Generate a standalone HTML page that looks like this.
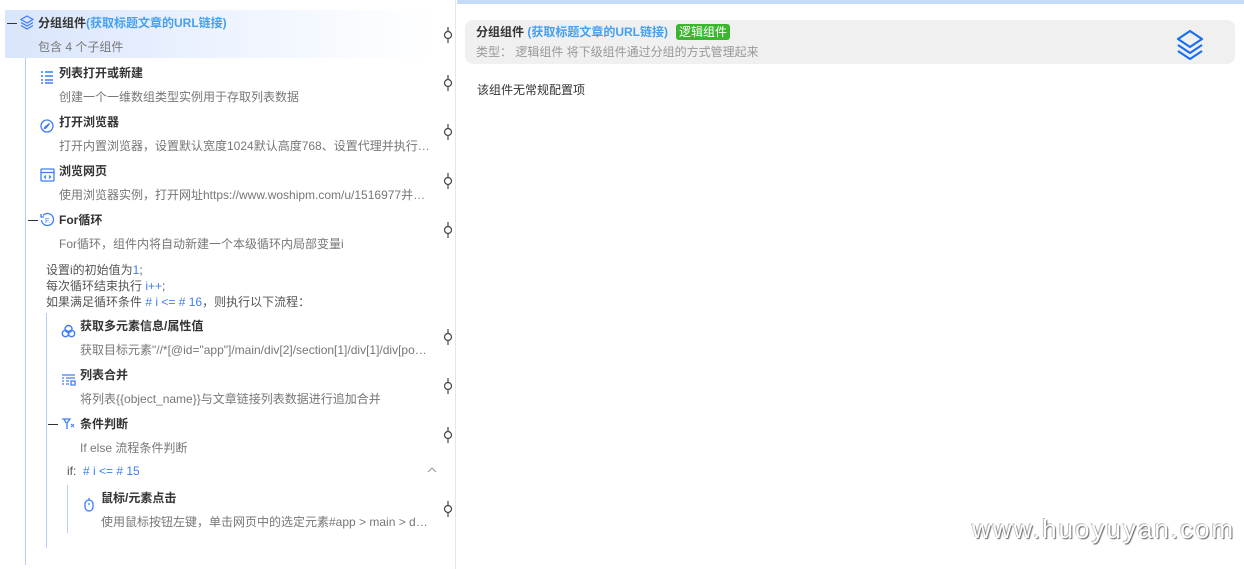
<!DOCTYPE html>
<html><head><meta charset="utf-8"><style>
*{margin:0;padding:0;box-sizing:border-box}
body{width:1244px;height:569px;background:#fff;position:relative;overflow:hidden;font-family:"Liberation Sans","Noto Sans CJK SC",sans-serif;font-size:12px;color:#333}
.a{position:absolute;white-space:nowrap;line-height:16px}
.t{font-weight:bold;color:#333}
.d{color:#777}
.b{color:#3d7ef5}
.vl{position:absolute;width:1px;background:#b9cdf4}
.dash{position:absolute;width:10px;height:1px;background:#333}
.con{position:absolute;width:10px;height:16px}
</style></head><body>
<div style="position:absolute;left:5px;top:10px;width:430px;height:48px;background:linear-gradient(90deg,#d9e5fc,#edf3ff 50%,#fafcff 85%,#fff)"></div>
<div style="position:absolute;left:455px;top:0;width:1px;height:569px;background:#e6e6e6"></div>
<div style="position:absolute;left:457px;top:0;width:787px;height:4px;background:#c5dcf8"></div>

<div class="dash" style="left:7px;top:23px"></div>
<svg class="a" style="left:20px;top:15px" width="14" height="15" viewBox="0 0 14 15" fill="none" stroke="#3d7ef5" stroke-width="1.2"><path d="M7 1L13 4.5 7 8 1 4.5Z"/><path d="M1 7.5L7 11 13 7.5"/><path d="M1 10.5L7 14 13 10.5"/></svg>
<div class="a t" style="left:38px;top:15px">分组组件<span style="color:#45a0f0">(获取标题文章的URL链接)</span></div>
<div class="a d" style="left:38px;top:39px">包含 4 个子组件</div>

<div class="vl" style="left:25px;top:58px;height:507px"></div>

<svg class="a" style="left:40px;top:70px" width="14" height="14" viewBox="0 0 14 14" stroke="#3d7ef5" stroke-width="1.4"><path d="M1 2h2M5 2h8M1 6h2M5 6h8M1 10h2M5 10h8M1 13h2M5 13h8"/></svg>
<div class="a t" style="left:59px;top:65px">列表打开或新建</div>
<div class="a d" style="left:59px;top:89px">创建一个一维数组类型实例用于存取列表数据</div>

<svg class="a" style="left:40px;top:119px" width="14" height="14" viewBox="0 0 14 14" fill="none" stroke="#3d7ef5" stroke-width="1.3"><circle cx="7" cy="7" r="6"/><path d="M9.5 4.5L6 9 4.5 9.5 5 8Z"/></svg>
<div class="a t" style="left:59px;top:114px">打开浏览器</div>
<div class="a d" style="left:59px;top:138px">打开内置浏览器，设置默认宽度1024默认高度768、设置代理并执行…</div>

<svg class="a" style="left:40px;top:168px" width="15" height="14" viewBox="0 0 15 14" fill="none" stroke="#3d7ef5" stroke-width="1.3"><rect x="1" y="1" width="13" height="12" rx="1"/><path d="M1 4.5h13M6 7.5l-1.5 1.5 1.5 1.5M9 7.5l1.5 1.5-1.5 1.5"/></svg>
<div class="a t" style="left:59px;top:163px">浏览网页</div>
<div class="a d" style="left:59px;top:187px">使用浏览器实例，打开网址https://www.woshipm.com/u/1516977并…</div>

<div class="dash" style="left:28px;top:220px"></div>
<svg class="a" style="left:40px;top:212px" width="15" height="15" viewBox="0 0 15 15" fill="none" stroke="#3d7ef5" stroke-width="1.3"><path d="M3 3.5A6 6 0 1 1 1.5 8"/><path d="M1 2v3h3"/><text x="5" y="11" font-size="7" fill="#3d7ef5" stroke="none" font-family="Liberation Sans">F.</text></svg>
<div class="a t" style="left:59px;top:212px">For循环</div>
<div class="a d" style="left:59px;top:236px">For循环，组件内将自动新建一个本级循环内局部变量i</div>

<div class="a" style="left:46px;top:262px;color:#555">设置i的初始值为<span class="b">1</span>;</div>
<div class="a" style="left:46px;top:278px;color:#555">每次循环结束执行 <span class="b">i++</span>;</div>
<div class="a" style="left:46px;top:294px;color:#555">如果满足循环条件 <span class="b"># i &lt;= # 16</span>，则执行以下流程：</div>

<div class="vl" style="left:46px;top:313px;height:235px"></div>
<svg class="a" style="left:61px;top:324px" width="15" height="14" viewBox="0 0 15 14" fill="none" stroke="#3d7ef5" stroke-width="1.4"><circle cx="7.5" cy="5" r="3.5"/><circle cx="4.5" cy="9.5" r="3.2"/><circle cx="10.5" cy="9.5" r="3.2"/></svg>
<div class="a t" style="left:80px;top:318px">获取多元素信息/属性值</div>
<div class="a d" style="left:80px;top:342px">获取目标元素"//*[@id="app"]/main/div[2]/section[1]/div[1]/div[po…</div>

<svg class="a" style="left:61px;top:373px" width="15" height="14" viewBox="0 0 15 14" stroke="#3d7ef5" stroke-width="1.3" fill="none"><path d="M1 2h13M1 5h2M5 5h9M1 8h2M5 8h3M1 11h2M5 11h3M10 8h4v4h-4z"/></svg>
<div class="a t" style="left:80px;top:367px">列表合并</div>
<div class="a d" style="left:80px;top:391px">将列表{{object_name}}与文章链接列表数据进行追加合并</div>

<div class="dash" style="left:48px;top:424px"></div>
<svg class="a" style="left:61px;top:418px" width="15" height="12" viewBox="0 0 15 12" stroke="#3d7ef5" stroke-width="1.3" fill="none"><path d="M1 1h8L6 5v6M3 1l2 4"/><path d="M10 6l3 3M13 6l-3 3" stroke-width="1"/></svg>
<div class="a t" style="left:80px;top:416px">条件判断</div>
<div class="a d" style="left:80px;top:440px">If else 流程条件判断</div>

<div class="a" style="left:67px;top:463px;color:#555">if: &nbsp;<span class="b"># i &lt;= # 15</span></div>
<svg class="a" style="left:427px;top:467px" width="10" height="6" viewBox="0 0 10 6" fill="none" stroke="#999"><path d="M1 5l4-4 4 4"/></svg>
<div class="vl" style="left:67px;top:485px;height:48px"></div>
<svg class="a" style="left:84px;top:497px" width="10" height="15" viewBox="0 0 10 15" fill="none" stroke="#3d7ef5" stroke-width="1.3"><rect x="1" y="3" width="8" height="11" rx="4"/><path d="M5 1v2M5 6v2"/></svg>
<div class="a t" style="left:101px;top:490px">鼠标/元素点击</div>
<div class="a d" style="left:101px;top:514px">使用鼠标按钮左键，单击网页中的选定元素#app &gt; main &gt; d…</div>

<svg width="0" height="0" style="position:absolute"><defs><g id="c"><path d="M5 0v4M5 12v4" stroke="#444" stroke-width="1.2"/><circle cx="5" cy="8" r="3.5" fill="#fff" stroke="#444" stroke-width="1.2"/></g></defs></svg>
<svg class="con" style="left:443px;top:27px"><use href="#c"/></svg>
<svg class="con" style="left:443px;top:75px"><use href="#c"/></svg>
<svg class="con" style="left:443px;top:124px"><use href="#c"/></svg>
<svg class="con" style="left:443px;top:173px"><use href="#c"/></svg>
<svg class="con" style="left:443px;top:222px"><use href="#c"/></svg>
<svg class="con" style="left:443px;top:329px"><use href="#c"/></svg>
<svg class="con" style="left:443px;top:378px"><use href="#c"/></svg>
<svg class="con" style="left:443px;top:427px"><use href="#c"/></svg>
<svg class="con" style="left:443px;top:501px"><use href="#c"/></svg>

<div style="position:absolute;left:465px;top:20px;width:770px;height:44px;background:#f0f0f0;border-radius:8px"></div>
<div class="a t" style="left:476px;top:24px">分组组件 <span style="color:#45a0f0">(获取标题文章的URL链接)</span></div>
<div class="a" style="left:676px;top:24px;background:#3cb52f;color:#fff;padding:0 3px;border-radius:3px;line-height:16px">逻辑组件</div>
<div class="a" style="left:476px;top:44px;color:#999">类型： 逻辑组件 将下级组件通过分组的方式管理起来</div>
<svg class="a" style="left:1175px;top:29px" width="30" height="31" viewBox="0 0 30 31" fill="none" stroke="#1a6ff0" stroke-width="2.2" stroke-linejoin="round"><path d="M15 2L27 10 15 18 3 10Z"/><path d="M3 16L15 24 27 16"/><path d="M3 22L15 30 27 22"/></svg>
<div class="a" style="left:477px;top:82px;color:#333">该组件无常规配置项</div>

<div class="a" style="left:972px;top:513px;font-size:26px;line-height:32px;color:#fff;text-shadow:1px 1px 1px #666,-1px -1px 0 #bbb;letter-spacing:2px">www.huoyuyan.com</div>
</body></html>
